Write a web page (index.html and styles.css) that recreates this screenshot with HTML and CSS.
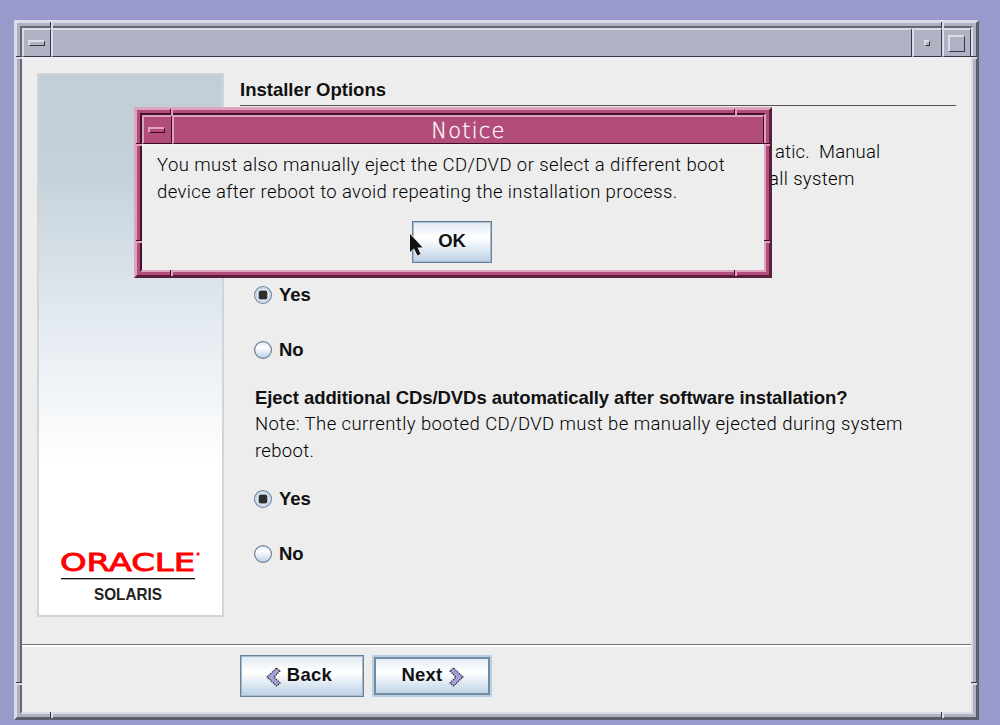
FILE: index.html
```html
<!DOCTYPE html>
<html lang="en">
<head>
<meta charset="utf-8">
<title>Installer Options</title>
<link rel="stylesheet" href="styles.css">
</head>
<body>
<div class="desktop">
  <div class="frame window">
    <i class="notch v top first"></i><i class="notch v top last"></i>
    <i class="notch v bottom first"></i><i class="notch v bottom last"></i>
    <i class="notch h left first"></i><i class="notch h left last"></i>
    <i class="notch h right first"></i><i class="notch h right last"></i>
    <div class="inner">
      <div class="titlebar">
        <span class="cell menu"><i class="bar"></i></span>
        <span class="cell title"></span>
        <span class="cell min"><i class="dot"></i></span>
        <span class="cell max"><i class="square"></i></span>
      </div>
      <div class="body">
        <aside class="sidebar">
          <svg class="logo" width="148" height="72" viewBox="0 -16 148 72">
            <text class="oracle" x="-1" y="20.500" textLength="135" lengthAdjust="spacingAndGlyphs">ORACLE</text>
            <circle cx="137" cy="4" r="1.700" fill="#f22"/>
            <rect x="0" y="28" width="134" height="1.300" fill="#111"/>
            <text class="solaris" x="33" y="49.500" textLength="68" lengthAdjust="spacingAndGlyphs">SOLARIS</text>
          </svg>
        </aside>
        <main class="main">
          <h1 class="heading"><span class="l-head">Installer Options</span></h1>
          <div class="options">
            <p class="copy intro"><span class="l-atic">atic.&nbsp; Manual</span><span class="l-all">all system</span></p>
            <div class="radio first">
              <svg class="knob" width="18" height="18" viewBox="0 0 18 18"><use href="#on"/></svg><span class="l-yes">Yes</span>
            </div>
            <div class="radio">
              <svg class="knob" width="18" height="18" viewBox="0 0 18 18"><use href="#off"/></svg><span class="l-no">No</span>
            </div>
            <h2 class="question"><span class="l-q">Eject additional CDs/DVDs automatically after software installation?</span></h2>
            <p class="copy"><span class="l-note">Note: The currently booted CD/DVD must be manually ejected during system</span><span class="l-reboot">reboot.</span></p>
            <div class="radio second">
              <svg class="knob" width="18" height="18" viewBox="0 0 18 18"><use href="#on"/></svg><span class="l-yes">Yes</span>
            </div>
            <div class="radio">
              <svg class="knob" width="18" height="18" viewBox="0 0 18 18"><use href="#off"/></svg><span class="l-no">No</span>
            </div>
          </div>
        </main>
      </div>
      <div class="footer">
        <button class="button back"><svg width="15" height="20" viewBox="0 0 15 20"><path d="M10.500 1 L14 4 L8 10 L14 16 L10.500 19 L1 10 Z" fill="#a3a3da" stroke="#222" stroke-width="1.200" stroke-dasharray="1.300 1"/></svg><span class="l-back">Back</span></button>
        <button class="button next"><span class="l-next">Next</span><svg width="15" height="20" viewBox="0 0 15 20"><path d="M4.500 1 L1 4 L7 10 L1 16 L4.500 19 L14 10 Z" fill="#a3a3da" stroke="#222" stroke-width="1.200" stroke-dasharray="1.300 1"/></svg></button>
      </div>
    </div>
  </div>

  <div class="frame dialog">
    <i class="notch v top first"></i><i class="notch v top last"></i>
    <i class="notch v bottom first"></i><i class="notch v bottom last"></i>
    <i class="notch h left first"></i><i class="notch h left last"></i>
    <i class="notch h right first"></i><i class="notch h right last"></i>
    <div class="inner">
      <div class="titlebar">
        <span class="cell menu"><i class="bar"></i></span>
        <span class="cell title"><span class="l-notice">Notice</span></span>
      </div>
      <div class="message">
        <p class="copy"><span class="l-d1">You must also manually eject the CD/DVD or select a different boot</span><span class="l-d2">device after reboot to avoid repeating the installation process.</span></p>
        <button class="button ok"><span class="l-ok">OK</span></button>
      </div>
    </div>
  </div>
  <svg class="cursor" width="18" height="26" viewBox="0 0 18 26"><path d="M2 2 V20 L6 16.500 L9.500 23.500 L12.500 22 L9.500 15.500 H14.500 Z" fill="#111" stroke="#eee" stroke-width="1.500" paint-order="stroke"/></svg>
</div>
<svg class="defs" width="0" height="0">
  <defs>
    <linearGradient id="face" x1="0" y1="0" x2="0" y2="1"><stop offset="0" stop-color="#dde8f3"/><stop offset=".35" stop-color="#fff"/><stop offset="1" stop-color="#b8cfe5"/></linearGradient>
    <g id="off"><circle cx="9" cy="9" r="8.400" fill="url(#face)" stroke="#6b8299" stroke-width="1.200"/></g>
    <g id="on"><circle cx="9" cy="9" r="8.400" fill="#fff" stroke="#6b8299" stroke-width="1.200"/><circle cx="9" cy="9" r="6.800" fill="none" stroke="#c4d8eb" stroke-width="2"/><rect x="4.600" y="4.600" width="8.800" height="8.800" rx="2.500" fill="#2e2e2e"/></g>
  </defs>
</svg>
</body>
</html>
```
FILE: styles.css
```css
* { box-sizing: border-box; }
body { margin: 0; }
.defs { display: block; }
.desktop {
  position: relative;
  width: 1000px;
  height: 725px;
  padding: 20px 0 0 14px;
  overflow: hidden;
  background: #9999cc;
  font-family: "Liberation Sans", Arial, sans-serif;
  font-size: 18.5px;
  color: #111;
}
p, h1, h2 { margin: 0; font-size: inherit; }
span[class^="l-"] { display: block; white-space: pre; }

/* Window frames */
.frame { position: relative; padding: 3px; border: 3px solid; border-color: var(--light) var(--dark) var(--dark) var(--light); background: var(--mid); }
.inner { height: 100%; display: flex; flex-direction: column; border: 2px solid; border-color: var(--groove) var(--light) var(--light) var(--groove); background: #ededed; }
.window { --light: #dcdce6; --mid: #aeb2c3; --dark: #5c5e69; --groove: #646775; --line: #333746; width: 965px; height: 700px; }
.dialog { --light: #dda4bf; --mid: #b24d7a; --dark: #5b1d3b; --groove: #49102c; --line: #3d0c24; position: absolute; left: 134px; top: 107px; width: 638px; height: 171px; }
.titlebar { display: flex; flex: none; height: 31px; background: var(--mid); border-bottom: 2px solid #f0eff3; }
.cell { display: flex; align-items: center; justify-content: center; padding-right: 2px; border: solid; border-width: 2px 1px 1px 2px; border-color: var(--light) var(--line) var(--line) var(--light); }
.menu { width: 29px; }
.dialog .menu { width: 30px; }
.title { flex: 1; }
.min { width: 30px; }
.max { width: 29px; }
.bar, .dot, .square { display: block; flex: none; border: solid; border-width: 2px 1px 1px 2px; border-color: var(--light) var(--line) var(--line) var(--light); }
.bar { width: 17px; height: 6px; }
.dot { width: 6px; height: 6px; }
.square { width: 17px; height: 17px; }

.notch { position: absolute; background: var(--light); }
.notch.v { width: 3px; height: 6px; border-left: 1px solid var(--line); }
.notch.h { width: 6px; height: 3px; border-top: 1px solid var(--line); }
.notch.v.top { top: -1px; }
.notch.v.bottom { bottom: -1px; }
.notch.v.first { left: 33px; }
.notch.v.last { right: 32px; }
.notch.h.left { left: -1px; }
.notch.h.right { right: -1px; }
.notch.h.first { top: 33px; }
.notch.h.last { bottom: 32px; }

/* Installer page */
.body { display: flex; flex: 1; border-bottom: 1px solid #777; padding: 14px 15px 27px 15px; }
.sidebar { display: flex; align-items: flex-end; width: 187px; padding: 0 0 9px 22px; border: 2px solid #d2d4d6; background: linear-gradient(#c1cdd7 0, #c5d1da 18%, #dfe7ee 42%, #fff 72%); }
.logo { display: block; flex: none; }
.oracle { font-family: "DejaVu Sans", sans-serif; font-size: 25px; fill: #f00; stroke: #f00; stroke-width: .9px; }
.solaris { font-weight: bold; font-size: 16.5px; fill: #222; }
.main { flex: 1; padding-left: 16px; }
.heading { height: 33px; border-bottom: 1px solid #555; padding-top: 3px; line-height: 28px; font-weight: bold; }
.options { padding-left: 15px; }
.copy { color: #000; font-family: Roboto, sans-serif; font-weight: 300; line-height: 27px; }
.intro { padding: 33px 0 0 520px; height: 180px; }
.intro .l-atic { letter-spacing: .15px; }
.intro .l-all { margin-left: -6px; letter-spacing: .35px; }
.radio { display: flex; align-items: center; gap: 7px; height: 18px; margin-left: -1px; margin-top: 37px; font-weight: bold; }
.radio.first { margin-top: 0; }
.radio.second { margin-top: 25px; }
.question { margin-top: 25px; line-height: 27px; font-weight: bold; }
.l-q { letter-spacing: -.07px; }
.l-note { letter-spacing: .42px; }
.l-reboot { letter-spacing: .3px; }
.footer { display: flex; gap: 8px; height: 67px; flex: none; padding: 8px 0 0 218px; border-top: 2px solid #fff; }
.button { display: flex; align-items: center; justify-content: center; height: 42px; padding: 0 0 2px; border: 1px solid #66809a; box-shadow: inset 0 0 0 1px #a9bccd; background: linear-gradient(#dfe9f3, #fff 38%, #fff 42%, #bad0e5); color: #111; font: bold 18.5px "Liberation Sans", Arial, sans-serif; }
.back { width: 124px; gap: 6px; padding-right: 6px; }
.next { width: 120px; gap: 7px; padding-left: 2px; border: 2px solid #b8cfe5; box-shadow: inset 0 0 0 2px #728ba1; }
.button svg { margin-top: 4px; }
.l-back { letter-spacing: .3px; }
.l-next { letter-spacing: .2px; }

/* Dialog */
.dialog .title { padding: 2px 0 0; color: #fff; font: 21px/1 "DejaVu Sans", sans-serif; font-weight: 300; letter-spacing: 1.2px; -webkit-text-stroke: .3px #fff; }
.message { flex: 1; padding: 6px 15px 0; }
.l-d1 { letter-spacing: .41px; }
.l-d2 { letter-spacing: .37px; }
.ok { width: 80px; margin: 15px 0 0 255px; }
.cursor { position: absolute; left: 408px; top: 232px; }
```
